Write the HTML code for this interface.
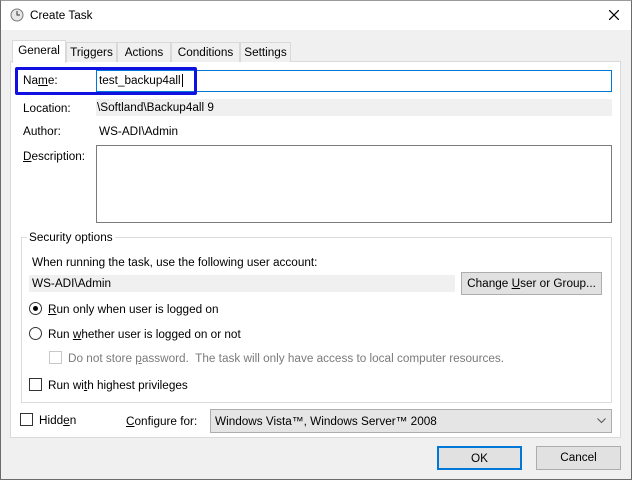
<!DOCTYPE html>
<html><head><meta charset="utf-8"><style>
*{box-sizing:border-box;margin:0;padding:0}
body{width:632px;height:480px;position:relative;background:#f0f0f0;font-family:"Liberation Sans",sans-serif;font-size:11.75px;color:#000;overflow:hidden}
.a{position:absolute;white-space:nowrap}
.win{position:absolute;left:0;top:0;width:632px;height:480px;border:1px solid #6b6b6b;border-top:1px solid #9a9a9a}
.tab{position:absolute;top:42px;height:20px;border:1px solid #d9d9d9;border-bottom:none;background:#f0f0f0;padding:3px 0 0;text-align:center}
.btn{position:absolute;background:#e1e1e1;border:1px solid #adadad;text-align:center;line-height:21px}
.fld{position:absolute;background:#f0f0f0}
.rad{position:absolute;width:13px;height:13px;border:1px solid #333;border-radius:50%;background:#fff}
.chk{position:absolute;width:13px;height:13px;border:1px solid #333;background:#fff}
u{text-decoration:underline}
</style></head><body>
<div class="win"></div>
<div class="a" style="left:1px;top:1px;width:630px;height:29px;background:#fff"></div>
<svg class="a" style="left:10px;top:8px" width="14" height="14" viewBox="0 0 14 14"><circle cx="7" cy="7" r="6" fill="#e8e8e8" stroke="#777"/><path d="M7 3v4h3" stroke="#333" fill="none"/></svg>
<div class="a" style="left:30px;top:9px">Create Task</div>
<svg class="a" style="left:609px;top:10px" width="10" height="10"><path d="M0 0L10 10M10 0L0 10" stroke="#000" stroke-width="1.2"/></svg>

<div class="a" style="left:10px;top:61px;width:611px;height:377px;background:#fff;border:1px solid #d9d9d9"></div>
<div class="tab" style="left:66px;width:51px">Triggers</div>
<div class="tab" style="left:117px;width:54px">Actions</div>
<div class="tab" style="left:171px;width:69px">Conditions</div>
<div class="tab" style="left:240px;width:51px">Settings</div>
<div class="tab" style="left:12px;top:40px;height:23px;width:54px;background:#fff">General</div>

<div class="a" style="left:96px;top:70px;width:516px;height:22px;border:1px solid #0078d7;background:#fff"></div>
<div class="a" style="left:15px;top:67px;width:182px;height:28px;border:3px solid #1010e0;border-radius:2px"></div>
<div class="a" style="left:23px;top:74px">Na<u>m</u>e:</div>
<div class="a" style="left:99px;top:74px">test_backup4all<span style="border-left:1px solid #000;margin-left:1px"></span></div>

<div class="fld" style="left:96px;top:99px;width:516px;height:17px"></div>
<div class="a" style="left:23px;top:102px">Location:</div>
<div class="a" style="left:97px;top:101px">\Softland\Backup4all 9</div>
<div class="a" style="left:23px;top:125px">Author:</div>
<div class="a" style="left:99px;top:125px">WS-ADI\Admin</div>
<div class="a" style="left:23px;top:150px"><u>D</u>escription:</div>
<div class="a" style="left:96px;top:145px;width:516px;height:78px;border:1px solid #7a7a7a;background:#fff"></div>

<div class="a" style="left:21px;top:237px;width:591px;height:166px;border:1px solid #dcdcdc"></div>
<div class="a" style="left:27px;top:231px;background:#fff;padding:0 2px">Security options</div>
<div class="a" style="left:32px;top:256px">When running the task, use the following user account:</div>
<div class="fld" style="left:29px;top:275px;width:426px;height:17px"></div>
<div class="a" style="left:32px;top:277px">WS-ADI\Admin</div>
<div class="btn" style="left:461px;top:272px;width:141px;height:23px">Change <u>U</u>ser or Group...</div>

<div class="rad" style="left:29px;top:302px"></div><div class="a" style="left:33px;top:306px;width:5px;height:5px;border-radius:50%;background:#000"></div>
<div class="a" style="left:48px;top:303px"><u>R</u>un only when user is logged on</div>
<div class="rad" style="left:29px;top:327px"></div>
<div class="a" style="left:48px;top:328px">Run <u>w</u>hether user is logged on or not</div>
<div class="chk" style="left:49px;top:351px;border-color:#c8c8c8"></div>
<div class="a" style="left:68px;top:352px;color:#7a7a7a">Do not store <u>p</u>assword.&nbsp; The task will only have access to local computer resources.</div>
<div class="chk" style="left:29px;top:378px"></div>
<div class="a" style="left:48px;top:379px">Run wi<u>t</u>h highest privileges</div>

<div class="chk" style="left:20px;top:413px"></div>
<div class="a" style="left:39px;top:414px">Hidd<u>e</u>n</div>
<div class="a" style="left:126px;top:415px"><u>C</u>onfigure for:</div>
<div class="a" style="left:210px;top:409px;width:402px;height:24px;background:#e5e5e5;border:1px solid #adadad;padding:5px 0 0 4px">Windows Vista™, Windows Server™ 2008</div>
<svg class="a" style="left:597px;top:418px" width="9" height="6"><path d="M0.5 0.5L4.5 4.5L8.5 0.5" stroke="#555" fill="none"/></svg>

<div class="btn" style="left:437px;top:446px;width:85px;height:24px;border:2px solid #0078d7">OK</div>
<div class="btn" style="left:536px;top:446px;width:85px;height:24px">Cancel</div>
</body></html>
